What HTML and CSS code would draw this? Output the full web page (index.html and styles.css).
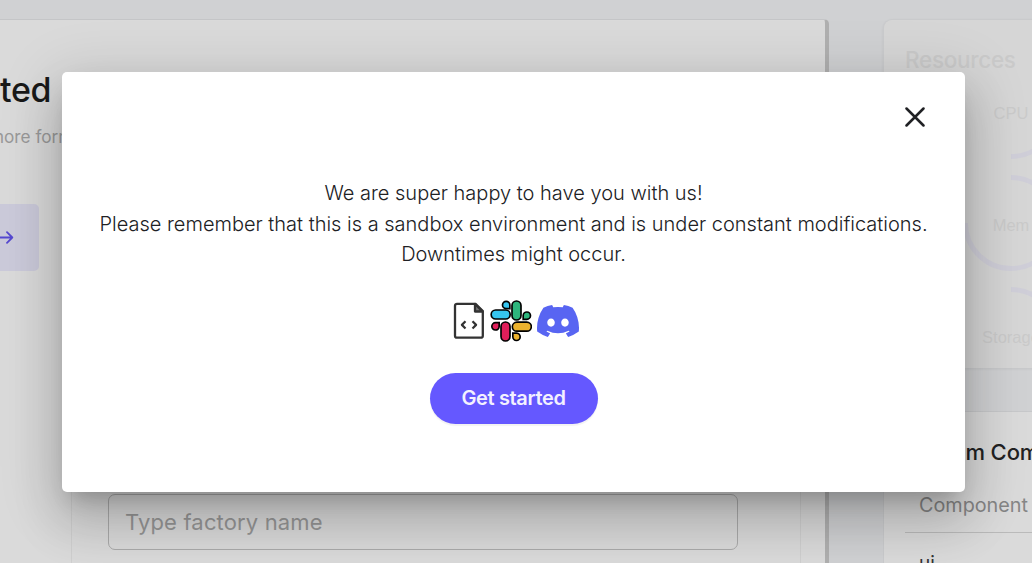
FILE: index.html
```
<!DOCTYPE html>
<html lang="en">
<head>
<meta charset="utf-8">
<title>Get started</title>
<link rel="stylesheet" href="styles.css">
</head>
<body>
<div class="page">
  <main class="panel">
    <h1 class="panel-title">ted</h1>
    <p class="panel-sub">more form</p>
    <div class="action">
      <svg width="14" height="14" viewBox="0 0 14 14" fill="none" stroke="#5548d0" stroke-width="1.8" stroke-linecap="round" stroke-linejoin="round"><path d="M-2 6.500h14M7 1.200L12.300 6.500l-5.300 5.300"/></svg>
    </div>
    <section class="form">
      <div class="input">Type factory name</div>
    </section>
  </main>
  <aside class="side">
    <section class="resources">
      <h2 class="res-title">Resources</h2>
      <div class="gauges">
        <div class="gauge"><svg class="ring" viewBox="0 0 96 96"><path d="M93.500 48a45.500 45.500 0 0 1-45.500 45.500"/></svg><span>CPU</span></div>
        <div class="gauge"><svg class="ring" viewBox="0 0 96 96"><path d="M48 2.500a45.500 45.500 0 1 1-45.500 45.500"/></svg><span>Mem</span></div>
        <div class="gauge"><svg class="ring" viewBox="0 0 96 96"><path d="M48 2.500a45.500 45.500 0 0 1 45.500 45.500"/></svg><span>Storage</span></div>
      </div>
    </section>
    <section class="components">
      <h2 class="comp-title">System Components</h2>
      <div class="comp-head">Component</div>
      <div class="comp-row">ui</div>
    </section>
  </aside>
</div>
<div class="modal" role="dialog">
  <div class="close">
    <svg width="20" height="20" viewBox="0 0 20 20" stroke="#202124" stroke-width="2.500" stroke-linecap="round"><path d="M1.500 1.500l17 17M18.500 1.500l-17 17"/></svg>
  </div>
  <p class="message">We are super happy to have you with us!<br>Please remember that this is a sandbox environment and is under constant modifications.<br>Downtimes might occur.</p>
  <div class="links">
    <svg width="32" height="38" viewBox="0 0 32 38" fill="none" stroke="#333" stroke-width="2.300" stroke-linejoin="round">
      <path d="M4 1.800h18.500l7.300 7.300v24.600a2 2 0 0 1-2 2H4a2 2 0 0 1-2-2V3.800a2 2 0 0 1 2-2z"/>
      <path d="M22 2v7.500h7.500z" fill="#777"/>
      <path d="M12.500 19.300L8.900 22.900l3.600 3.600M19.500 19.300l3.600 3.600-3.600 3.600" stroke-width="2.200"/>
    </svg>
    <svg class="slack" width="42" height="42" viewBox="150 32 126 126" stroke="#000" stroke-width="5">
      <g fill="#36c5f0"><rect x="153.500" y="62" width="57" height="27" rx="13.500"/><path d="M209.500 58h-11.500a11 11 0 1 1 11.500-11z"/></g>
      <g fill="#2eb67d"><rect x="216" y="35" width="27" height="57" rx="13.500"/><path d="M249.500 90v-11.500a11 11 0 1 1 11 11.500z"/></g>
      <g fill="#e01e5a"><rect x="183" y="98" width="27" height="57" rx="13.500"/><path d="M177.500 100v11.500a11 11 0 1 1-11-11.500z"/></g>
      <g fill="#ecb22e"><rect x="217" y="98.500" width="57" height="27" rx="13.500"/><path d="M218.500 131.500h11.500a11 11 0 1 1-11.500 11z"/></g>
    </svg>
    <svg class="discord" width="42" height="32" viewBox="0 0 127.140 96.360" fill="#5865f2"><path d="M107.700 8.070A105.150 105.150 0 0 0 81.470 0a72.060 72.060 0 0 0-3.360 6.830 97.680 97.680 0 0 0-29.110 0A72.370 72.370 0 0 0 45.640 0a105.890 105.890 0 0 0-26.250 8.090C2.790 32.650-1.710 56.600.54 80.210a105.730 105.730 0 0 0 32.170 16.150 77.700 77.700 0 0 0 6.890-11.110 68.420 68.420 0 0 1-10.850-5.180c.91-.66 1.800-1.340 2.660-2a75.570 75.570 0 0 0 64.320 0c.87.710 1.760 1.390 2.660 2a68.680 68.680 0 0 1-10.870 5.190 77 77 0 0 0 6.890 11.100 105.250 105.250 0 0 0 32.190-16.140c2.640-27.380-4.510-51.110-18.900-72.150zM42.450 65.690C36.180 65.690 31 60 31 53s5-12.740 11.430-12.740S54 46 53.890 53s-5.050 12.690-11.440 12.690zm42.240 0C78.410 65.690 73.250 60 73.250 53s5-12.740 11.440-12.740S96.230 46 96.120 53s-5.040 12.690-11.430 12.690z"/></svg>
  </div>
  <button class="start">Get started</button>
</div>
</body>
</html>
```
FILE: styles.css
```
* { box-sizing: border-box; }
body { margin: 0; width: 1032px; height: 563px; overflow: hidden; background: #d0d1d3; font-family: Inter, "Liberation Sans", sans-serif; }
h1, h2, p { margin: 0; }
.page { display: flex; gap: 54px; height: 563px; padding-top: 19px; overflow: hidden; }
.panel { width: 829px; flex: none; background: #dadada; border-top: 1px solid #c4c5c7; border-right: 4px solid #b0b0b0; border-top-right-radius: 5px; }
.panel-title { height: 56px; margin-top: 42px; font-size: 34px; line-height: 56px; font-weight: 500; color: #191919; letter-spacing: -0.3px; }
.panel-sub { height: 24px; margin: 7px 0 0 -11px; font-size: 17.200px; line-height: 24px; color: #999; white-space: nowrap; font-weight: 400; }
.action { width: 39px; height: 67px; margin-top: 55px; border-radius: 0 5px 5px 0; background: #cbcada; display: flex; align-items: center; }
.form { width: 730px; height: 400px; margin: 23px 0 0 71px; padding: 199px 36px 0; border: 1px solid #cfcfcf; }
.input { width: 630px; height: 56px; border: 1px solid #aaa; border-radius: 7px; padding-left: 16px; font-size: 22px; line-height: 55px; letter-spacing: 0.150px; color: #969696; }
.side { width: 200px; flex: none; }
.resources { height: 349px; background: #d6d6d6; border-top: 1px solid #c9cacc; border-left: 1px solid #cacbcd; border-radius: 9px 0 0 5px; overflow: hidden; box-shadow: 0 1px 3px rgba(0,0,0,.06); }
.res-title { padding: 25px 0 0 21px; font-size: 22.500px; line-height: 30px; font-weight: 500; letter-spacing: -0.3px; color: #cacaca; }
.gauges { display: flex; flex-direction: column; gap: 16px; margin: -12px 0 0 79px; }
.gauge { display: grid; width: 96px; height: 96px; place-items: center; flex: none; }
.gauge > * { grid-area: 1 / 1; }
.gauge span { color: #cacaca; font: 16.500px "Liberation Sans", Arial, sans-serif; padding-top: 4px; }
.ring { width: 96px; height: 96px; fill: none; stroke: #cfced8; stroke-width: 5; }
.components { height: 200px; margin-top: 43px; background: #dadada; border-top: 1px solid #c7c8ca; border-left: 1px solid #cacbcd; padding-left: 21px; border-radius: 8px 0 0; }
.comp-title { padding-top: 25px; margin-left: 2px; font-size: 22px; line-height: 30px; font-weight: 500; letter-spacing: -0.100px; color: #222; white-space: nowrap; }
.comp-head { height: 66px; padding: 24px 0 0 14px; border-bottom: 1px solid #bababa; font-size: 19.800px; line-height: 28px; color: #868686; }
.comp-row { padding: 17px 0 0 14px; font-size: 19px; line-height: 28px; color: #333; }

.modal { position: absolute; left: 62px; top: 72px; width: 903px; height: 420px; background: #fff; border-radius: 5px; display: flex; flex-direction: column; align-items: center; box-shadow: 0 14px 19px -9px rgba(0,0,0,.2), 0 30px 48px 4px rgba(0,0,0,.14), 0 11px 58px 10px rgba(0,0,0,.12); }
.close { align-self: flex-end; height: 20px; margin: 35px 40px 0 0; }
.close svg, .links svg { display: block; }
.message { margin-top: 51px; text-align: center; font-size: 20px; line-height: 30.500px; font-weight: 300; color: #202124; white-space: nowrap; }
.links { display: flex; align-items: center; height: 42px; margin-top: 30px; margin-left: 4px; }
.slack { margin-left: 5px; }
.discord { margin-left: 5px; }
.start { width: 168px; height: 51px; margin-top: 31px; padding: 0; border: 0; border-radius: 26px; background: #6558ff; color: #f3f1ff; font: 600 20px Inter, "Liberation Sans", sans-serif; letter-spacing: -0.350px; box-shadow: 0 2px 1px rgba(0,0,0,.05); }
```
